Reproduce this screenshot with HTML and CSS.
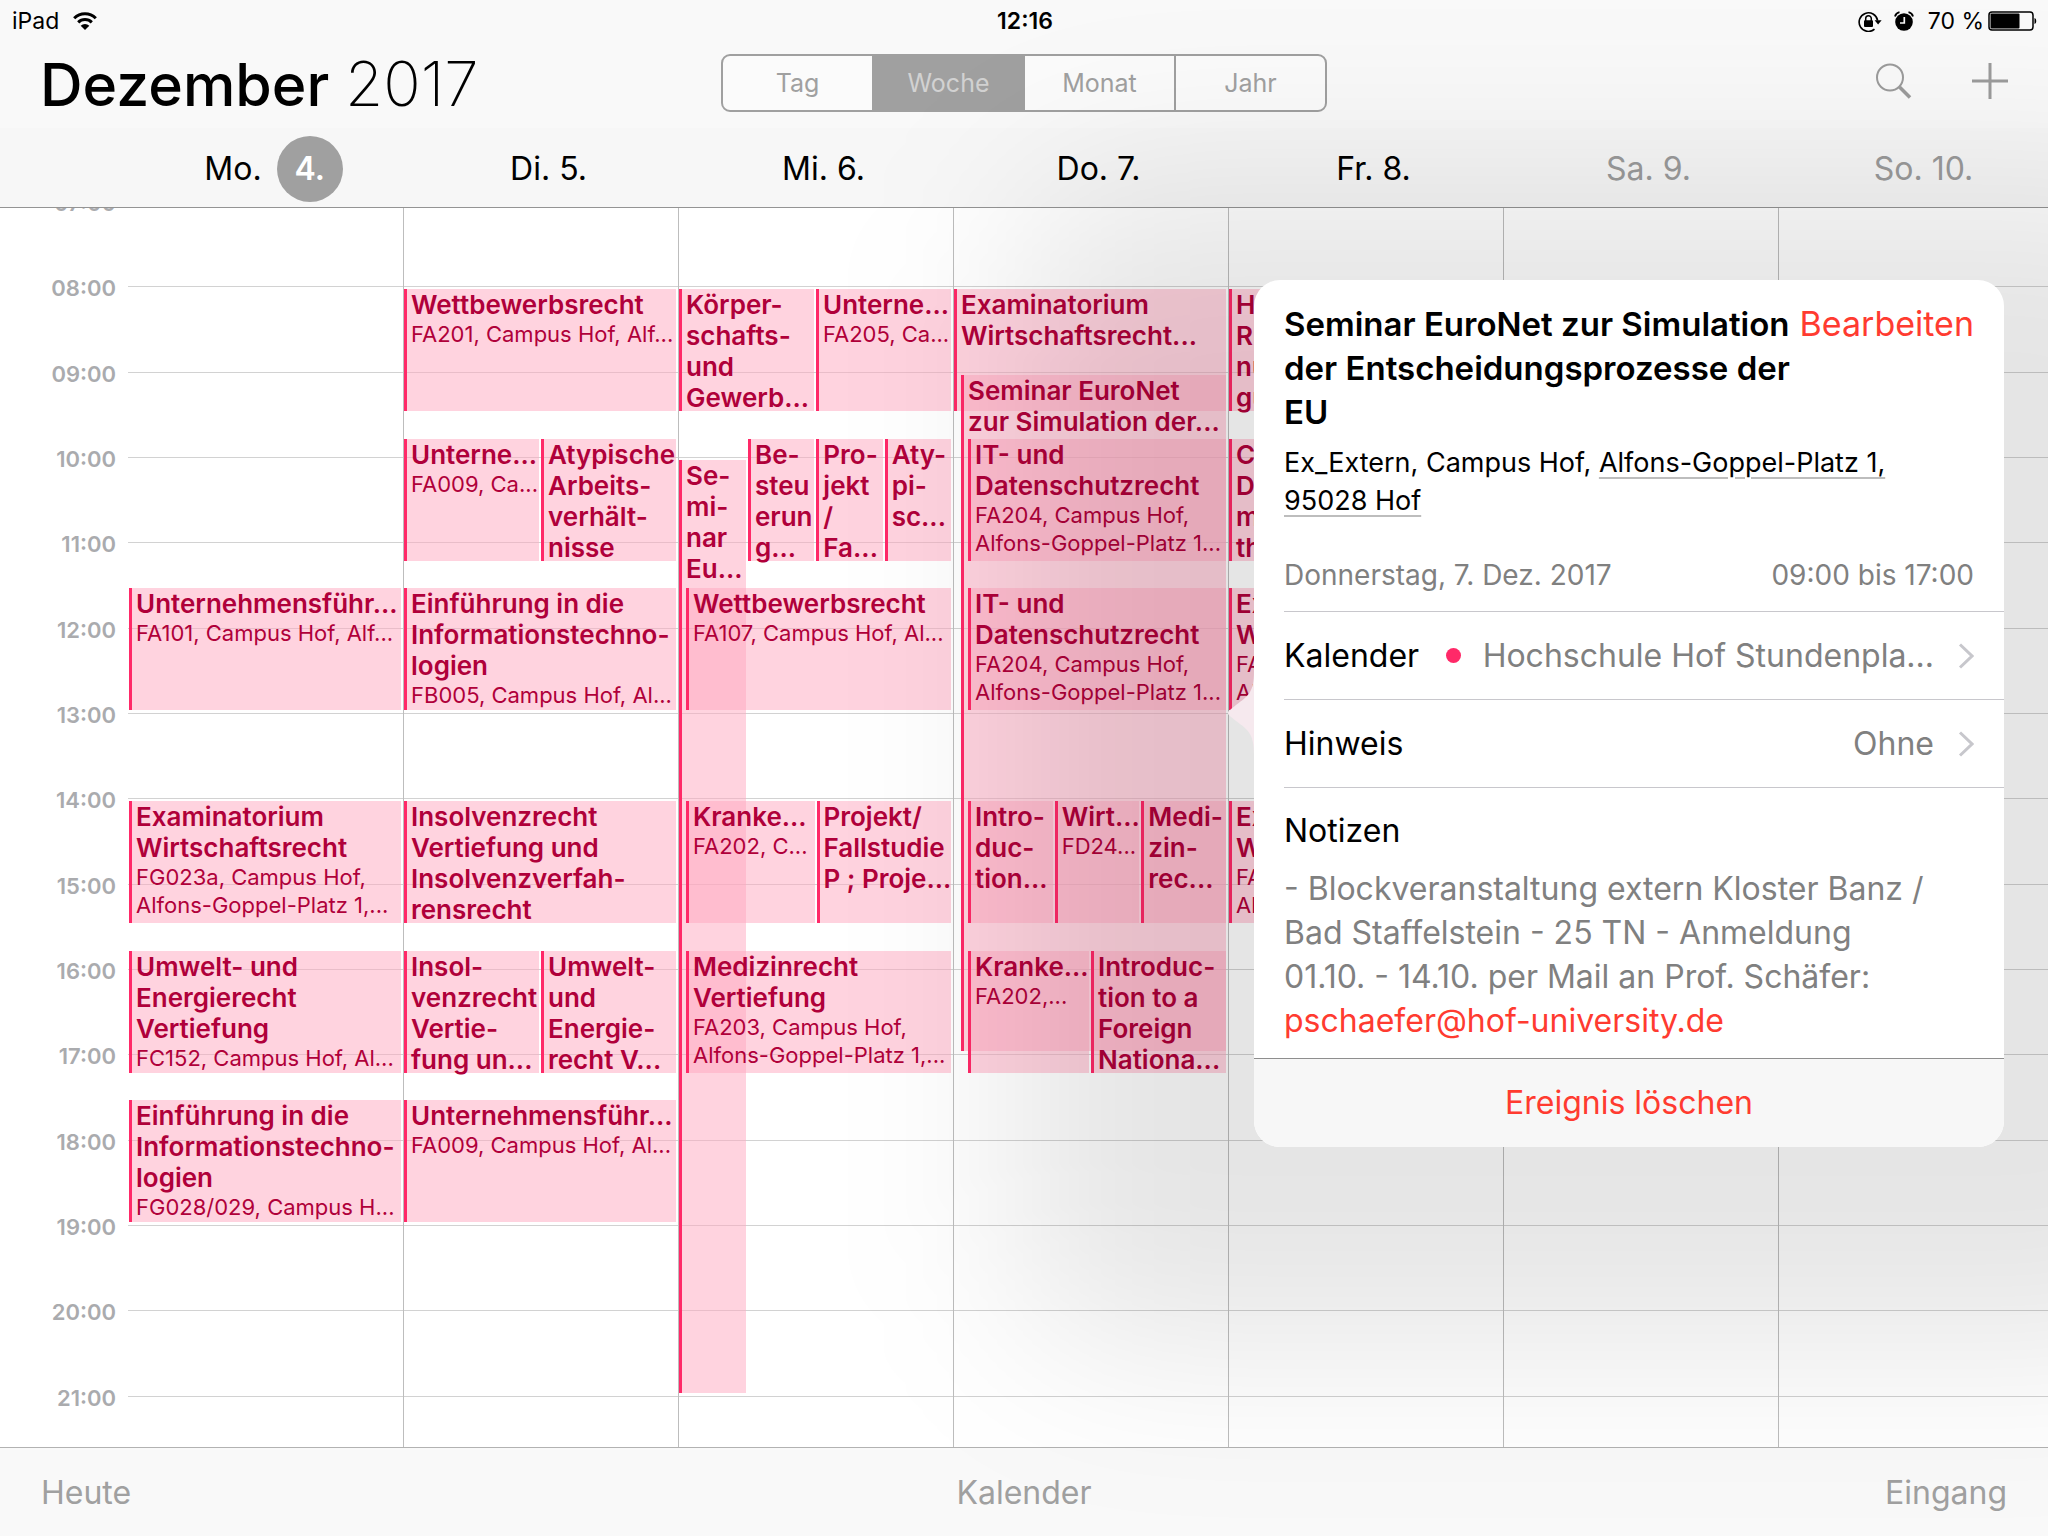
FILE: index.html
```html
<!DOCTYPE html>
<html lang="de">
<head>
<meta charset="utf-8">
<meta name="viewport" content="width=device-width, initial-scale=1">
<title>Kalender – Dezember 2017</title>
<link rel="stylesheet" href="styles.css">
</head>
<body>
<div class="app">
  <header class="top">
    <div class="status">
      <div class="status-left">
        <span>iPad</span>
        <svg class="wifi" viewBox="0 0 24 18" aria-hidden="true">
          <path d="M1.2 6.2a15.2 15.2 0 0 1 21.6 0" fill="none" stroke="#000" stroke-width="3"/>
          <path d="M5.2 10.4a9.6 9.6 0 0 1 13.6 0" fill="none" stroke="#000" stroke-width="3"/>
          <path d="M12 18l-4.300-4.300a6 6 0 0 1 8.600 0z"/>
        </svg>
      </div>
      <strong class="clock">12:16</strong>
      <div class="status-right">
        <svg class="lock" viewBox="0 0 24 21" aria-hidden="true">
          <path d="M16.500 18.200A9.300 9.300 0 1 1 19.600 9.500" fill="none" stroke="#000" stroke-width="1.600"/>
          <path d="M16.600 9.300h7l-3.500 4.200z"/>
          <rect x="6" y="9.300" width="9" height="6.700" rx="1"/>
          <path d="M7.700 10V7.500a2.800 2.800 0 0 1 5.600 0V10" fill="none" stroke="#000" stroke-width="1.500"/>
        </svg>
        <svg class="alarm" viewBox="0 0 20 20" aria-hidden="true">
          <circle cx="10" cy="11" r="8.800"/>
          <path d="M1 5.500A6 6 0 0 1 5.500 1.200M19 5.500A6 6 0 0 0 14.500 1.200" fill="none" stroke="#000" stroke-width="1.800"/>
          <path d="M10.300 6v6H6" fill="none" stroke="#f6f6f6" stroke-width="1.700"/>
        </svg>
        <span>70 %</span>
        <svg class="battery" viewBox="0 0 50 20" aria-hidden="true">
          <rect x="1" y="1" width="44" height="18" rx="3" fill="none" stroke="#000" stroke-width="1.500"/>
          <rect x="2.500" y="2.500" width="29" height="15" rx="1"/>
          <path d="M46.500 7c2.300.5 2.300 5.500 0 6z"/>
        </svg>
      </div>
    </div>
    <div class="titlebar">
      <h1>Dezember <span>2017</span></h1>
      <div class="segments" role="group" aria-label="Ansicht">
        <button type="button">Tag</button>
        <button type="button" class="active" aria-pressed="true">Woche</button>
        <button type="button">Monat</button>
        <button type="button">Jahr</button>
      </div>
      <div class="actions">
        <button type="button" aria-label="Suchen">
          <svg viewBox="0 0 36 36"><circle cx="14" cy="14.500" r="13" fill="none" stroke="#9b9b9b" stroke-width="2"/><path d="M23.500 24L34 34.500" stroke="#9b9b9b" stroke-width="3.500"/></svg>
        </button>
        <button type="button" aria-label="Neues Ereignis">
          <svg viewBox="0 0 36 36"><path d="M18 0v36M0 18h36" stroke="#9b9b9b" stroke-width="3"/></svg>
        </button>
      </div>
    </div>
    <div class="daynames">
      <div class="today">Mo. <b>4.</b></div>
      <div>Di. 5.</div>
      <div>Mi. 6.</div>
      <div>Do. 7.</div>
      <div>Fr. 8.</div>
      <div class="weekend">Sa. 9.</div>
      <div class="weekend">So. 10.</div>
    </div>
  </header>

  <main class="viewport">
    <div class="timeline">
      <div class="hours">
        <div class="hour"><time>07:00</time></div>
        <div class="hour"><time>08:00</time></div>
        <div class="hour"><time>09:00</time></div>
        <div class="hour"><time>10:00</time></div>
        <div class="hour"><time>11:00</time></div>
        <div class="hour"><time>12:00</time></div>
        <div class="hour"><time>13:00</time></div>
        <div class="hour"><time>14:00</time></div>
        <div class="hour"><time>15:00</time></div>
        <div class="hour"><time>16:00</time></div>
        <div class="hour"><time>17:00</time></div>
        <div class="hour"><time>18:00</time></div>
        <div class="hour"><time>19:00</time></div>
        <div class="hour"><time>20:00</time></div>
        <div class="hour"><time>21:00</time></div>
      </div>
      <div class="days">
        <section class="day">
          <div class="slot" style="--from:19;--to:25">
            <article class="event"><h3>Unternehmensführ...</h3><p>FA101, Campus Hof, Alf...</p></article>
          </div>
          <div class="slot" style="--from:29;--to:35">
            <article class="event"><h3>Examinatorium<br>Wirtschaftsrecht</h3><p>FG023a, Campus Hof,<br>Alfons-Goppel-Platz 1,...</p></article>
          </div>
          <div class="slot" style="--from:36;--to:42">
            <article class="event"><h3>Umwelt- und<br>Energierecht<br>Vertiefung</h3><p>FC152, Campus Hof, Al...</p></article>
          </div>
          <div class="slot" style="--from:43;--to:49">
            <article class="event"><h3>Einführung in die<br>Informationstechno-<br>logien</h3><p>FG028/029, Campus H...</p></article>
          </div>
        </section>

        <section class="day">
          <div class="slot" style="--from:5;--to:11">
            <article class="event"><h3>Wettbewerbsrecht</h3><p>FA201, Campus Hof, Alf...</p></article>
          </div>
          <div class="slot" style="--from:12;--to:18">
            <article class="event"><h3>Unterne...</h3><p>FA009, Ca...</p></article>
            <article class="event"><h3>Atypische<br>Arbeits-<br>verhält-<br>nisse</h3></article>
          </div>
          <div class="slot" style="--from:19;--to:25">
            <article class="event"><h3>Einführung in die<br>Informationstechno-<br>logien</h3><p>FB005, Campus Hof, Al...</p></article>
          </div>
          <div class="slot" style="--from:29;--to:35">
            <article class="event"><h3>Insolvenzrecht<br>Vertiefung und<br>Insolvenzverfah-<br>rensrecht</h3></article>
          </div>
          <div class="slot" style="--from:36;--to:42">
            <article class="event"><h3>Insol-<br>venzrecht<br>Vertie-<br>fung un...</h3></article>
            <article class="event"><h3>Umwelt-<br>und<br>Energie-<br>recht V...</h3></article>
          </div>
          <div class="slot" style="--from:43;--to:49">
            <article class="event"><h3>Unternehmensführ...</h3><p>FA009, Campus Hof, Al...</p></article>
          </div>
        </section>

        <section class="day">
          <div class="slot" style="--from:5;--to:11">
            <article class="event"><h3>Körper-<br>schafts-<br>und<br>Gewerb...</h3></article>
            <article class="event"><h3>Unterne...</h3><p>FA205, Ca...</p></article>
          </div>
          <div class="slot quarter" style="--from:13;--to:57">
            <article class="event"><h3>Se-<br>mi-<br>nar<br>Eu...</h3></article>
          </div>
          <div class="slot after-quarter" style="--from:12;--to:18">
            <article class="event"><h3>Be-<br>steu<br>erun<br>g...</h3></article>
            <article class="event"><h3>Pro-<br>jekt<br>/<br>Fa...</h3></article>
            <article class="event"><h3>Aty-<br>pi-<br>sc...</h3></article>
          </div>
          <div class="slot inset-1" style="--from:19;--to:25">
            <article class="event"><h3>Wettbewerbsrecht</h3><p>FA107, Campus Hof, Al...</p></article>
          </div>
          <div class="slot inset-1 halves" style="--from:29;--to:35">
            <article class="event"><h3>Kranke...</h3><p>FA202, C...</p></article>
            <article class="event"><h3>Projekt/<br>Fallstudie<br>P ; Proje...</h3></article>
          </div>
          <div class="slot inset-1" style="--from:36;--to:42">
            <article class="event"><h3>Medizinrecht<br>Vertiefung</h3><p>FA203, Campus Hof,<br>Alfons-Goppel-Platz 1,...</p></article>
          </div>
        </section>

        <section class="day">
          <div class="slot" style="--from:5;--to:11">
            <article class="event"><h3>Examinatorium<br>Wirtschaftsrecht...</h3></article>
          </div>
          <div class="slot inset-1" style="--from:9;--to:41">
            <article class="event"><h3>Seminar EuroNet<br>zur Simulation der...</h3></article>
          </div>
          <div class="slot inset-2" style="--from:12;--to:18">
            <article class="event"><h3>IT- und<br>Datenschutzrecht</h3><p>FA204, Campus Hof,<br>Alfons-Goppel-Platz 1...</p></article>
          </div>
          <div class="slot inset-2" style="--from:19;--to:25">
            <article class="event"><h3>IT- und<br>Datenschutzrecht</h3><p>FA204, Campus Hof,<br>Alfons-Goppel-Platz 1...</p></article>
          </div>
          <div class="slot inset-2" style="--from:29;--to:35">
            <article class="event"><h3>Intro-<br>duc-<br>tion...</h3></article>
            <article class="event"><h3>Wirt...</h3><p>FD24...</p></article>
            <article class="event"><h3>Medi-<br>zin-<br>rec...</h3></article>
          </div>
          <div class="slot inset-2 halves" style="--from:36;--to:42">
            <article class="event"><h3>Kranke...</h3><p>FA202,...</p></article>
            <article class="event"><h3>Introduc-<br>tion to a<br>Foreign<br>Nationa...</h3></article>
          </div>
        </section>

        <section class="day">
          <div class="slot" style="--from:5;--to:11">
            <article class="event"><h3>H<br>R<br>nu<br>gu</h3></article>
          </div>
          <div class="slot" style="--from:12;--to:18">
            <article class="event"><h3>C<br>D<br>m<br>th</h3></article>
          </div>
          <div class="slot" style="--from:19;--to:25">
            <article class="event"><h3>Ex<br>W</h3><p>FA<br>Al</p></article>
          </div>
          <div class="slot" style="--from:29;--to:35">
            <article class="event"><h3>Ex<br>W</h3><p>FA<br>Al</p></article>
          </div>
        </section>
        <section class="day"></section>
        <section class="day"></section>
      </div>
    </div>
  </main>

  <footer class="toolbar">
    <button type="button">Heute</button>
    <button type="button">Kalender</button>
    <button type="button">Eingang</button>
  </footer>

  <aside class="popover" aria-label="Ereignisdetails">
    <svg class="arrow" viewBox="0 0 26 84" aria-hidden="true"><path d="M26 0C26 22 20 25 8 34 2 39 0 40 0 42s2 3 8 8c12 9 18 12 18 34z" fill="#f6e9ee"/></svg>
    <div class="sheet">
      <div class="summary">
        <div class="headline">
          <h2>Seminar EuroNet zur Simulation<br>der Entscheidungsprozesse der<br>EU</h2>
          <button type="button" class="edit">Bearbeiten</button>
        </div>
        <p class="place">Ex_Extern, Campus Hof, <a href="#karte">Alfons-Goppel-Platz 1,<br>95028 Hof</a></p>
        <p class="when"><span>Donnerstag, 7. Dez. 2017</span><span>09:00 bis 17:00</span></p>
      </div>
      <button type="button" class="row">
        <span class="label">Kalender</span>
        <i class="dot"></i>
        <span class="value">Hochschule Hof Stundenpla...</span>
        <svg class="chevron" viewBox="0 0 16 26" aria-hidden="true"><path d="M2 1.500L14 13 2 24.500" fill="none" stroke="#c7c7cc" stroke-width="3"/></svg>
      </button>
      <button type="button" class="row">
        <span class="label">Hinweis</span>
        <span class="value">Ohne</span>
        <svg class="chevron" viewBox="0 0 16 26" aria-hidden="true"><path d="M2 1.500L14 13 2 24.500" fill="none" stroke="#c7c7cc" stroke-width="3"/></svg>
      </button>
      <div class="notes">
        <h3>Notizen</h3>
        <p>- Blockveranstaltung extern Kloster Banz /<br>Bad Staffelstein - 25 TN - Anmeldung<br>01.10. - 14.10. per Mail an Prof. Schäfer:<br><a href="mailto:pschaefer@hof-university.de">pschaefer@hof-university.de</a></p>
      </div>
      <button type="button" class="delete">Ereignis löschen</button>
    </div>
  </aside>
</div>
</body>
</html>
```
FILE: styles.css
```css
* { box-sizing: border-box; margin: 0; padding: 0; }

body {
  font-family: Inter, "Liberation Sans", sans-serif;
  color: #000;
  background: #fff;
}

button {
  font: inherit;
  color: inherit;
  background: none;
  border: 0;
}

svg { display: block; }

.app {
  position: relative;
  display: flex;
  flex-direction: column;
  height: 100vh;
  overflow: hidden;
}

/* Header */
.top {
  flex: none;
  background: #f9f9f9;
  border-bottom: 1px solid #949494;
}

.status {
  display: grid;
  grid-template-columns: 1fr auto 1fr;
  align-items: center;
  height: 42px;
  padding: 0 10px 0 12px;
  font-size: 23px;
}
.status-left, .status-right { display: flex; align-items: center; }
.status-left { gap: 14px; }
.status-right { justify-content: flex-end; }
.status-right span { margin: 0 4px 0 14px; }
.clock { font-weight: 600; }
.wifi { width: 24px; height: 18px; }
.lock { width: 24px; height: 21px; margin-right: 12px; }
.alarm { width: 20px; height: 20px; }
.battery { width: 50px; height: 20px; }

.titlebar {
  display: grid;
  grid-template-columns: 1fr 606px 1fr;
  align-items: center;
  height: 86px;
  padding: 0 40px 2px;
}
.titlebar h1 {
  font-size: 59px;
  line-height: 82px;
  font-weight: 500;
  white-space: nowrap;
}
.titlebar h1 span { font-size: 62px; font-weight: 200; }

.segments {
  display: grid;
  grid-template-columns: repeat(4, 1fr);
  gap: 2px;
  height: 58px;
  margin-bottom: 2px;
  border: 2px solid #a0a0a0;
  border-radius: 9px;
  overflow: hidden;
  background: #a0a0a0;
  font-size: 25px;
  color: #a0a0a0;
}
.segments button { background: #fbfbfb; }
.segments .active { background: #a0a0a0; color: #d2d2d2; }

.actions {
  display: flex;
  justify-content: flex-end;
  gap: 60px;
  padding-bottom: 6px;
}
.actions svg { width: 36px; height: 36px; }

.daynames {
  display: grid;
  grid-template-columns: repeat(7, 1fr);
  align-items: center;
  height: 79px;
  padding: 2px 0 0 136px;
  margin-right: -13px;
  background: #f7f7f7;
  font-size: 32px;
  text-align: center;
}
.daynames .weekend { color: #9b9b9b; }
.daynames .today {
  display: flex;
  align-items: center;
  justify-content: center;
  gap: 15px;
}
.daynames b {
  width: 66px;
  height: 66px;
  line-height: 66px;
  border-radius: 50%;
  background: #a0a0a0;
  color: #fff;
  font-weight: 600;
}

/* Week grid, 07:00 to 22:00 */
.viewport {
  flex: 1;
  min-height: 0;
  overflow: hidden;
}
.timeline {
  display: grid;
  grid-template-rows: minmax(0, 1fr);
  height: 1280px;
  margin: -7px -5px 0 0;
}
.hours, .days { grid-area: 1 / 1; display: grid; }
.hours { grid-template-rows: repeat(15, minmax(0, 1fr)); }
.hour { display: flex; gap: 12px; }
.hour time {
  width: 116px;
  margin-top: -12px;
  text-align: right;
  font-size: 22px;
  line-height: 28px;
  font-weight: 600;
  color: #aaabae;
}
.hour::after {
  content: "";
  flex: 1;
  border-top: 1px solid #d2d2d2;
}

.days {
  grid-template-columns: repeat(7, minmax(0, 1fr));
  grid-template-rows: minmax(0, 1fr);
  padding-left: 128px;
}
.day {
  display: grid;
  grid-template-rows: repeat(60, minmax(0, 1fr));
  grid-template-columns: minmax(0, 1fr);
  border-left: 1px solid #bdbdbd;
}
.day:first-child { border-left-color: transparent; }

.slot {
  grid-column: 1;
  grid-row: var(--from) / var(--to);
  display: flex;
  gap: 2px;
  margin: 3px 2px 3px 0;
}
.inset-1 { margin-left: 7px; }
.inset-2 { margin-left: 14px; }
.quarter { width: 67px; }
.after-quarter { margin-left: 69px; }

.event {
  flex: 1 1 0;
  min-width: 0;
  padding-left: 4px;
  border-left: 3px solid #ff2968;
  background: rgba(255, 168, 192, .5);
  background-clip: padding-box;
  color: #b0003a;
  white-space: nowrap;
}
/* Insets shorten only the first half, so the split stays at mid-day-column */
.inset-1.halves .event:first-child { flex: 0 0 calc(50% - 4px); }
.inset-2.halves .event:first-child { flex: 0 0 calc(50% - 8px); }

.event h3 {
  font-size: 26px;
  line-height: 31px;
  font-weight: 600;
}
.event p {
  font-size: 22px;
  line-height: 28px;
}

/* Bottom bar */
.toolbar {
  flex: none;
  display: grid;
  grid-template-columns: 1fr auto 1fr;
  align-items: center;
  height: 89px;
  padding: 0 41px;
  border-top: 1px solid #b2b2b2;
  background: #f9f9f9;
  font-size: 32px;
  color: #a0a0a0;
}
.toolbar button:first-child { justify-self: start; }
.toolbar button:last-child { justify-self: end; }

/* Event details */
.popover {
  position: absolute;
  z-index: 1;
  top: 280px;
  right: 44px;
  width: 750px;
}
.popover::before {
  content: "";
  position: absolute;
  z-index: -1;
  inset: -100px -220px -200px -235px;
  border-radius: 100px;
  background: rgba(0, 0, 0, .1);
  filter: blur(90px);
}
.arrow {
  position: absolute;
  top: 391px;
  left: -26px;
  width: 26px;
  height: 84px;
}
.sheet {
  display: flex;
  flex-direction: column;
  border-radius: 26px;
  overflow: hidden;
  background: #fff;
  font-size: 32px;
  line-height: 44px;
}

.summary { padding: 22px 30px 17px; }
.headline {
  display: flex;
  justify-content: space-between;
  white-space: nowrap;
}
.headline h2 { font-size: 33px; font-weight: 600; }
.edit { align-self: flex-start; font-size: 34px; color: #ff3b30; }
.place {
  margin-top: 10px;
  font-size: 27px;
  line-height: 38px;
}
.place a {
  color: inherit;
  text-decoration: underline 2px #bdbdbd;
  text-underline-offset: 5px;
}
.when {
  display: flex;
  justify-content: space-between;
  margin-top: 36px;
  font-size: 28px;
  line-height: 38px;
  color: #808080;
}

.row {
  display: flex;
  align-items: center;
  height: 88px;
  margin-left: 30px;
  padding-right: 30px;
  border-top: 1px solid #c8c7cc;
  text-align: left;
}
.row .value {
  margin: 0 24px 0 auto;
  color: #808080;
}
.dot {
  width: 15px;
  height: 15px;
  margin-left: 27px;
  border-radius: 50%;
  background: #ff2968;
}
.chevron { width: 16px; height: 26px; }

.notes {
  margin-left: 30px;
  padding: 21px 0 15px;
  border-top: 1px solid #c8c7cc;
}
.notes h3 { font-size: 32px; font-weight: 400; }
.notes p { margin-top: 14px; color: #808080; white-space: nowrap; }
.notes a { color: #ff3b30; text-decoration: none; }

.delete {
  height: 89px;
  border-top: 1px solid #8e8e8e;
  background: #f7f7f7;
  color: #ff3b30;
}
```
